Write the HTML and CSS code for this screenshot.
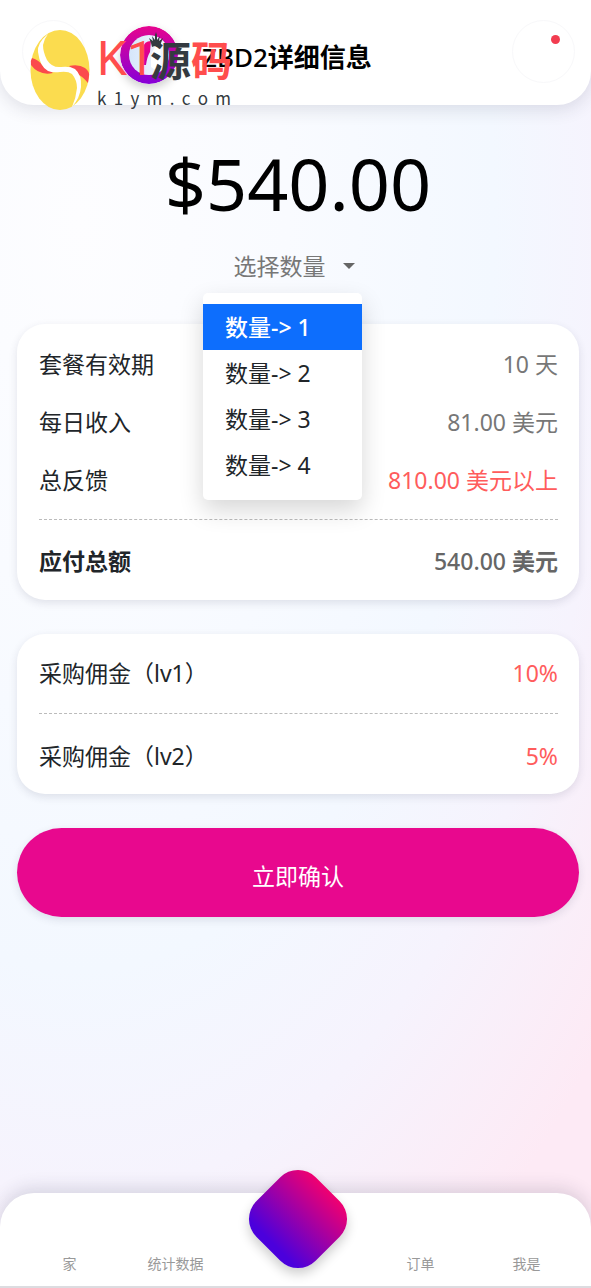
FILE: index.html
```html
<!DOCTYPE html>
<html lang="zh-CN">
<head>
<meta charset="utf-8">
<meta name="viewport" content="width=device-width, initial-scale=1">
<title>ZBD2详细信息</title>
<link rel="stylesheet" href="styles.css">
</head>
<body>
<div class="page">
  <header class="topbar">
    <button class="round-button" type="button" aria-label="返回"></button>
    <div class="heading">
      <svg class="coin" viewBox="0 0 58 58" aria-hidden="true">
        <defs>
          <linearGradient id="ring" x1="0" y1="0" x2="0" y2="1"><stop offset="0" stop-color="#e6048e"/><stop offset="1" stop-color="#8600d8"/></linearGradient>
          <linearGradient id="face" x1="0" y1="0" x2="1" y2="0"><stop offset="0" stop-color="#d5e6fb"/><stop offset="1" stop-color="#f7f8ff"/></linearGradient>
          <linearGradient id="arch" x1="0" y1="0" x2="0" y2="1"><stop offset="0" stop-color="#f0047c"/><stop offset="1" stop-color="#c400a8"/></linearGradient>
        </defs>
        <circle cx="29" cy="29" r="29" fill="url(#ring)"/>
        <circle cx="29" cy="29" r="20" fill="url(#face)"/>
        <path d="M23 39V22Q24 15 31 15L30 26Q27 31 26 39Z" fill="url(#arch)"/>
        <path d="M31 41V32Q32 24 36 20L41 18L40 42Q35 45 31 41Z" fill="#fff"/>
      </svg>
      <h1 class="title"><span class="code">ZBD2</span>详细信息</h1>
    </div>
    <button class="round-button" type="button" aria-label="通知"><span class="dot"></span></button>
    <div class="brand">
      <svg class="brand-mark" viewBox="0 0 60 80" aria-hidden="true">
        <ellipse cx="30" cy="40" rx="29.500" ry="40" fill="#fbdc4f"/>
        <path d="M2 28Q9 30 13 36L23 43Q9 46 1 35Q0 31 2 28ZM39 36Q49 34 55 38Q60 42 59 46L58 53Q53 47 49 45Z" fill="#fb4a4c"/>
        <path d="M18 4Q7 13 8 22Q10 37 18 41Q23 43 30 42Q38 41 42 44Q47 50 47 58Q46 68 42 77Q50 68 51 57Q52 45 45 39Q40 36 31 37Q22 38 17 30Q13 22 13 15Q14 9 18 4Z" fill="#fff"/>
      </svg>
      <div class="brand-text">
        <div class="brand-name"><span class="latin">K1</span><span class="dark">源</span><span class="red">码</span>
          <svg class="crown" viewBox="0 0 14 15" aria-hidden="true"><path d="M3 15L2 11L0 6L4 9L3 4L6 8L6 3L7 0L8 3L8 8L11 4L10 9L14 6L12 11L11 15Q7 13 3 15Z" fill="#343a40"/></svg>
        </div>
        <div class="brand-url"><span>k</span><span>1</span><span>y</span><span>m</span><span>.</span><span>c</span><span>o</span><span>m</span></div>
      </div>
    </div>
  </header>

  <main class="content">
    <p class="price">$540.00</p>
    <div class="picker">
      <button class="picker-button" type="button" aria-haspopup="listbox" aria-expanded="true">选择数量<span class="caret"></span></button>
      <div class="menu">
        <button class="option active" type="button">数量-&gt; 1</button>
        <button class="option" type="button">数量-&gt; 2</button>
        <button class="option" type="button">数量-&gt; 3</button>
        <button class="option" type="button">数量-&gt; 4</button>
      </div>
    </div>
    <dl class="card">
      <div class="row"><dt>套餐有效期</dt><dd>10 天</dd></div>
      <div class="row"><dt>每日收入</dt><dd>81.00 美元</dd></div>
      <div class="row"><dt>总反馈</dt><dd class="accent">810.00 美元以上</dd></div>
      <div class="row total"><dt>应付总额</dt><dd><span class="amount">540.00</span> 美元</dd></div>
    </dl>
    <dl class="card levels">
      <div class="row"><dt>采购佣金（lv1）</dt><dd class="accent">10%</dd></div>
      <div class="row split"><dt>采购佣金（lv2）</dt><dd class="accent">5%</dd></div>
    </dl>
    <button class="confirm" type="button">立即确认</button>
  </main>

  <nav class="tabs">
    <a class="tab" href="#home">家</a>
    <a class="tab" href="#stats">统计数据</a>
    <a class="center" href="#main" aria-label="主页"><span class="diamond"></span></a>
    <a class="tab" href="#orders">订单</a>
    <a class="tab" href="#me">我是</a>
  </nav>
</div>
</body>
</html>
```
FILE: styles.css
```css
* { box-sizing: border-box; }
body {
  margin: 0;
  font-family: "Noto Sans", "Noto Sans CJK SC", sans-serif;
  font-size: 23px;
  font-weight: 400;
  line-height: 34px;
  color: #212529;
}
button { font: inherit; color: inherit; border: 0; padding: 0; background: none; }
a { color: inherit; text-decoration: none; }
.page {
  min-height: 100vh;
  display: flex;
  flex-direction: column;
  background: radial-gradient(ellipse 690px 1250px at 80px 220px, #fdfdff 0%, #f9fbff 30%, #f3f8ff 60%, #f6f3fd 78%, #fdeaf5 100%);
}
.topbar {
  position: relative;
  display: flex;
  justify-content: space-between;
  align-items: flex-start;
  height: 105px;
  padding: 20px 16px 0 22px;
  border-radius: 0 0 34px 34px;
  background: #fff;
  box-shadow: 0 4px 18px rgba(40, 40, 70, .14);
}
.round-button {
  position: relative;
  width: 63px;
  height: 63px;
  border: 1px solid #f8f8fa;
  border-radius: 50%;
}
.dot {
  position: absolute;
  top: 14px;
  right: 14px;
  width: 9px;
  height: 9px;
  border-radius: 50%;
  background: #f23c50;
}
.heading {
  flex: 1;
  display: flex;
  gap: 24px;
  padding: 6px 0 0 35px;
}
.coin { width: 58px; height: 58px; border-radius: 50%; box-shadow: 0 4px 10px rgba(0, 0, 0, .2); }
.title { margin: 0; padding-top: 14px; font-size: 26px; font-weight: 700; line-height: 34px; color: #000; }
.code, .amount { font-weight: 500; }
.brand {
  position: absolute;
  top: 30px;
  left: 30px;
  display: flex;
  gap: 7px;
}
.brand-mark { width: 60px; height: 80px; }
.brand-text { display: flex; flex-direction: column; width: 134px; }
.brand-name {
  position: relative;
  display: flex;
  align-items: center;
  height: 57px;
  font-size: 41px;
  font-family: "Noto Sans CJK SC", sans-serif;
  font-weight: 700;
  line-height: 57px;
  color: #ff4d4d;
}
.brand-name .latin { width: 53px; font-family: Roboto, sans-serif; font-size: 48px; font-weight: 400; }
.brand-name .dark { color: #343a40; }
.crown { position: absolute; top: 2px; left: 52px; width: 14px; height: 15px; }
.brand-url {
  display: flex;
  justify-content: space-between;
  font-size: 17px;
  font-family: "Noto Sans CJK SC", sans-serif;
  font-weight: 400;
  line-height: 22px;
  color: #343a40;
}
.content { padding: 33px 12px 0 17px; flex: 1; }
.price { margin: 0; font-size: 72px; line-height: 90px; text-align: center; color: #000; }
.picker { position: relative; display: flex; justify-content: center; padding: 21px 8px 0 0; }
.picker-button { display: flex; align-items: center; gap: 17px; color: #777; }
.caret { border: 6px solid transparent; border-top-color: #666; border-bottom: 0; }
.menu {
  position: absolute;
  top: 65px;
  left: 186px;
  z-index: 2;
  width: 159px;
  padding: 11px 0 12px;
  border-radius: 5px;
  background: #fff;
  box-shadow: 0 10px 24px rgba(0, 0, 0, .16);
}
.option { display: block; width: 100%; height: 46px; padding-left: 22px; text-align: left; }
.option.active { background: #0d6efd; color: #fff; font-weight: 500; }
.card {
  margin: 41px 0 0;
  padding: 11px 21px 12px 22px;
  border-radius: 28px;
  background: #fff;
  box-shadow: 0 3px 8px rgba(40, 40, 70, .12);
}
.row { display: flex; justify-content: space-between; padding: 12px 0; }
.row dd { margin: 0; color: #777; }
.row .accent { color: #ff5c5c; }
.total { margin-top: 10px; padding: 24px 0 10px; border-top: 1px dashed #bbb; font-weight: 700; }
.total dd { color: #666; }
.levels { margin-top: 34px; padding-top: 10px; }
.split { margin-top: 11px; padding: 25px 0 9px; border-top: 1px dashed #bbb; }
.confirm {
  display: block;
  width: 100%;
  height: 89px;
  margin-top: 34px;
  padding-top: 6px;
  border-radius: 45px;
  background: #e8088e;
  color: #fff;
  box-shadow: 0 3px 8px rgba(40, 40, 70, .12);
}
.tabs {
  display: grid;
  grid-template-columns: 105px 107px 1fr 107px 105px;
  height: 95px;
  padding: 0 12px 0 17px;
  border-bottom: 2px solid #dcdce0;
  border-radius: 34px 34px 0 0;
  background: #fff;
  box-shadow: 0 -4px 18px rgba(40, 40, 70, .16);
}
.tab { padding-top: 60px; text-align: center; font-size: 14px; line-height: 22px; color: #999; }
.center { display: flex; justify-content: center; align-items: center; height: 52px; }
.diamond {
  flex: none;
  width: 84px;
  height: 84px;
  border-radius: 25px;
  transform: rotate(45deg);
  background: linear-gradient(0deg, #4b00dc 8%, #f00070 100%);
  box-shadow: 4px 4px 12px rgba(0, 0, 0, .2);
}
```
